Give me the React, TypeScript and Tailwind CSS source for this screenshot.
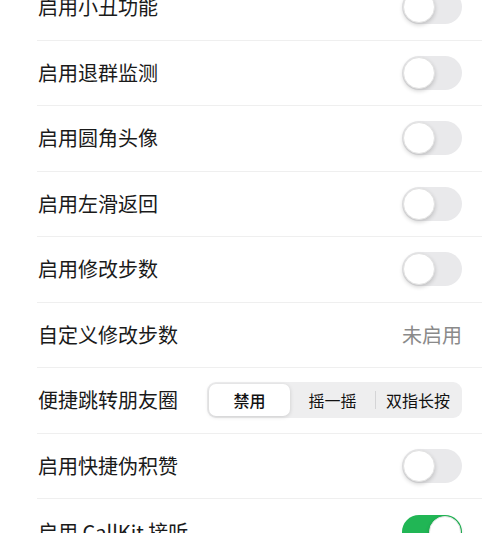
import React from "react";

const font = { fontFamily: '"Noto Sans CJK SC", "Noto Sans", sans-serif' };

function Toggle({ on }: { on?: boolean }) {
  return (
    <div
      className={
        "relative w-[60px] h-[34px] rounded-full shrink-0 " +
        (on ? "bg-[#21b655]" : "bg-[#e9e9eb]")
      }
    >
      <div
        className={
          "absolute top-[1px] w-[32px] h-[32px] rounded-full bg-white shadow-[0_2px_4px_rgba(0,0,0,0.18)] border border-[#e2e2e2] " +
          (on ? "left-[27px]" : "left-[1px]")
        }
      />
    </div>
  );
}

function Row({ label, children, last }: { label: string; children?: React.ReactNode; last?: boolean }) {
  return (
    <div
      className={
        "h-[65.5px] flex items-center justify-between pr-[20px] " +
        (last ? "" : "border-b border-[#efefef]")
      }
    >
      <span className="text-[20px] text-[#1a1a1a] pl-[1px] leading-none">{label}</span>
      {children}
    </div>
  );
}

export default function App() {
  return (
    <div className="w-[500px] h-[533px] bg-white overflow-hidden" style={font}>
      <div className="ml-[37px] mr-[18px] mt-[-25px]">
        <Row label="启用小丑功能">
          <Toggle />
        </Row>
        <Row label="启用退群监测">
          <Toggle />
        </Row>
        <Row label="启用圆角头像">
          <Toggle />
        </Row>
        <Row label="启用左滑返回">
          <Toggle />
        </Row>
        <Row label="启用修改步数">
          <Toggle />
        </Row>
        <Row label="自定义修改步数">
          <span className="text-[20px] text-[#8a8a8a] leading-none">未启用</span>
        </Row>
        <Row label="便捷跳转朋友圈">
          <div className="w-[255px] h-[36px] rounded-[9px] bg-[#eeeeef] p-[2px] flex items-center">
            <div className="w-[81px] h-[32px] rounded-[7px] bg-white shadow-[0_1px_4px_rgba(0,0,0,0.15)] flex items-center justify-center text-[16px] text-[#111] font-medium">
              禁用
            </div>
            <div className="flex-1 h-full flex items-center justify-center text-[16px] text-[#111]">
              摇一摇
            </div>
            <div className="w-[1px] h-[18px] bg-[#d4d4d6]" />
            <div className="w-[84px] h-full flex items-center justify-center text-[16px] text-[#111]">
              双指长按
            </div>
          </div>
        </Row>
        <Row label="启用快捷伪积赞">
          <Toggle />
        </Row>
        <Row label="启用 CallKit 接听" last>
          <Toggle on />
        </Row>
      </div>
    </div>
  );
}
